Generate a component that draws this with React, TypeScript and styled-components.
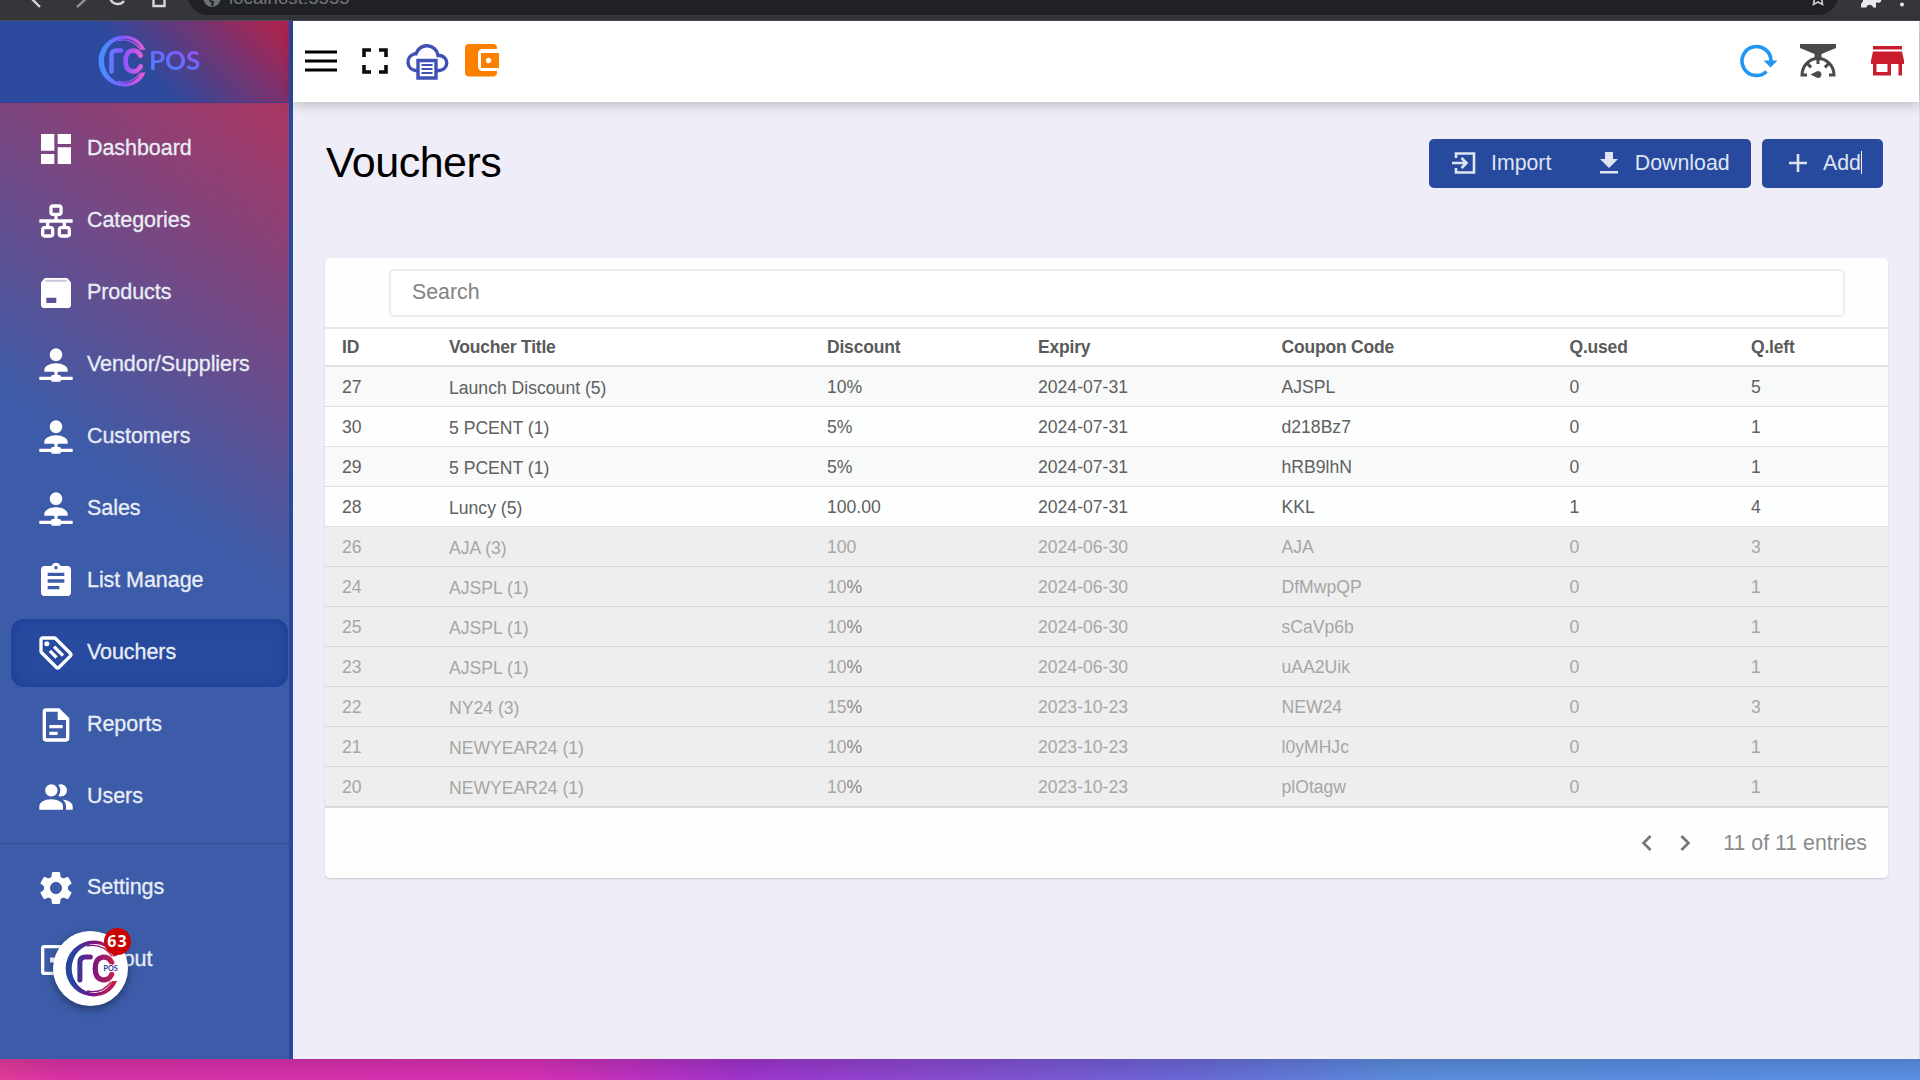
import React from "react";
import styled, { createGlobalStyle } from "styled-components";
import { MdDashboard, MdAssignment, MdSettings, MdChevronLeft, MdChevronRight } from "react-icons/md";

const Global = createGlobalStyle`
  * { box-sizing: border-box; }
  html, body { margin: 0; padding: 0; overflow: hidden; }
  body { font-family: "Liberation Sans", Arial, sans-serif; background: #35363a; }
`;

const Screen = styled.div`
  width: 1920px;
  height: 1080px;
  display: flex;
  flex-direction: column;
  overflow: hidden;
`;

const BrowserBar = styled.div`
  height: 21px;
  flex: none;
  display: flex;
  align-items: flex-end;
  overflow: hidden;
  background: #35363a;
  border-bottom: 1px solid #4a4a5c;
`;
const NavGlyphs = styled.svg`
  width: 188px;
  height: 20px;
  flex: none;
`;
const UrlPill = styled.div`
  width: 1650px;
  height: 40px;
  margin-bottom: 5px;
  border-radius: 20px;
  background: #202124;
  flex: none;
  display: flex;
  align-items: flex-end;
  justify-content: space-between;
  padding: 0 14px 0 15px;
`;
const UrlLeft = styled.div`
  display: flex;
  align-items: flex-end;
  gap: 8px;
  color: #74777b;
  font-size: 18.5px;
  line-height: 22px;
  letter-spacing: 0.1px;
`;
const UrlText = styled.span`
  padding-bottom: 6px;
`;
const BarRight = styled.svg`
  width: 82px;
  height: 20px;
  flex: none;
`;

const Body = styled.div`
  flex: none;
  height: 1038px;
  display: flex;
  background: #efedf7;
`;

const Sidebar = styled.aside`
  width: 293px;
  flex: none;
  display: flex;
  flex-direction: column;
  border-right: 4px solid #294a9f;
  background: #3c5ca9;
`;
const Brand = styled.div`
  height: 82px;
  flex: none;
  display: flex;
  align-items: center;
  padding: 0 0 2px 97px;
  border-bottom: 1px solid #43398a;
  background: linear-gradient(45deg, #2c4a9e 0%, #2c4a9e 47%, #aa2450 95%);
`;
const BrandName = styled.span`
  font: 700 26px "Lato", "Liberation Sans", sans-serif;
  line-height: 30px;
  letter-spacing: -0.1px;
  padding-bottom: 1px;
  background: linear-gradient(20deg, #4a86ff 10%, #5f72ff 45%, #9850f5 85%);
  -webkit-background-clip: text;
  background-clip: text;
  color: transparent;
`;
const Menu = styled.nav`
  flex: 1;
  display: flex;
  flex-direction: column;
  background: linear-gradient(215.4deg, #ab3662 0%, #3c5ca9 50%, #3c5ca9 100%) no-repeat;
  background-size: 289px 790px;
`;
const MenuGroup = styled.div<{ $top: number }>`
  display: flex;
  flex-direction: column;
  gap: 4px;
  padding: ${(p) => p.$top}px 1px 0 11px;
`;
const Separator = styled.div`
  height: 1px;
  margin-top: 12px;
  background: #34509a;
`;
const MenuItem = styled.div<{ $active?: boolean }>`
  height: 68px;
  display: flex;
  align-items: center;
  padding-left: 24.6px;
  gap: 11.4px;
  border-radius: 13px;
  color: #e9edf6;
  font-size: 21.5px;
  background: ${(p) => (p.$active ? "#274a9f" : "transparent")};
  box-shadow: ${(p) => (p.$active ? "inset 0 0 12px rgba(20, 50, 140, 0.6)" : "none")};
  svg {
    width: 40px;
    height: 40px;
    flex: none;
    fill: #fff;
    margin-bottom: 1px;
  }
`;
const MenuLabel = styled.span`
  letter-spacing: -0.06px;
  padding-bottom: 2px;
  -webkit-text-stroke: 0.3px currentColor;
`;

const ChatBubble = styled.div`
  position: absolute;
  left: 53px;
  top: 931px;
  width: 75px;
  height: 75px;
  padding: 9px 0 0 11px;
  border-radius: 50%;
  background: #fff;
  box-shadow: 0 3px 9px rgba(0, 0, 0, 0.4);
`;
const ChatBadge = styled.span`
  position: absolute;
  left: 51px;
  top: -3px;
  width: 27px;
  height: 27px;
  border-radius: 50%;
  background: #cc0202;
  color: #fff;
  font: bold 16px/27px "Open Sans", "Liberation Sans", sans-serif;
  letter-spacing: 1.2px;
  text-align: center;
`;

const Main = styled.main`
  flex: 1;
  display: flex;
  flex-direction: column;
  border-right: 1px solid #dcdae8;
`;
const TopBar = styled.header`
  height: 81px;
  flex: none;
  display: flex;
  align-items: center;
  background: #fff;
  padding: 0 15px 2px 12px;
  box-shadow: 0 3px 12px rgba(0, 0, 0, 0.22);
`;
const ToolIcon = styled.svg<{ $w: number; $h: number; $ml?: number }>`
  width: ${(p) => p.$w}px;
  height: ${(p) => p.$h}px;
  margin-left: ${(p) => p.$ml ?? 0}px;
  flex: none;
`;
const Spacer = styled.div`
  flex: 1;
`;

const Content = styled.section`
  display: flex;
  flex-direction: column;
  padding: 37px 31px 0 32px;
`;
const TitleRow = styled.div`
  display: flex;
  justify-content: space-between;
  height: 119px;
  padding-right: 5px;
`;
const Title = styled.h1`
  margin: 0 0 0 1px;
  font-size: 43px;
  font-weight: 400;
  line-height: 46px;
  letter-spacing: -0.5px;
  color: #000;
`;
const Actions = styled.div`
  display: flex;
  gap: 11px;
`;
const ButtonGroup = styled.div<{ $w: number }>`
  width: ${(p) => p.$w}px;
  height: 49px;
  display: flex;
  background: #274a9f;
  border-radius: 5px;
`;
const ActionButton = styled.button<{ $pl: number; $gap: number }>`
  display: flex;
  align-items: center;
  gap: ${(p) => p.$gap}px;
  border: 0;
  background: none;
  padding: 0 0 1px ${(p) => p.$pl}px;
  color: #dfe4f1;
  font: 21.3px "Liberation Sans", Arial, sans-serif;
  svg { flex: none; }
`;
const Caret = styled.span`
  width: 1px;
  height: 23px;
  display: inline-block;
  vertical-align: -4px;
  background: #eef;
`;

const Card = styled.div`
  width: 1563px;
  height: 620px;
  display: flex;
  flex-direction: column;
  background: #fdfefe;
  border-radius: 5px;
  box-shadow: 0 1px 2px rgba(0, 0, 0, 0.16);
  overflow: hidden;
`;
const SearchRow = styled.div`
  height: 69px;
  flex: none;
  padding: 11px 43px 0 64px;
`;
const SearchBox = styled.div`
  height: 48px;
  border: 2px solid #ececec;
  border-radius: 5px;
  background: #fff;
  padding-left: 21px;
  color: #828282;
  font-size: 21.3px;
  line-height: 43px;
`;
const GridRow = styled.div`
  display: grid;
  grid-template-columns: 107px 378px 211px 243.5px 288px 181.5px 1fr;
  padding-left: 17px;
`;
const HeadRow = styled(GridRow)`
  height: 40px;
  flex: none;
  border-top: 2px solid #e8eaea;
  border-bottom: 2px solid #e2e4e4;
  background: #fff;
  font-size: 17.5px;
  letter-spacing: -0.2px;
  font-weight: 700;
  line-height: 36px;
  color: #5a5a5a;
`;
const DataRow = styled(GridRow)<{ $expired: boolean; $striped: boolean }>`
  height: 40px;
  flex: none;
  font-size: 17.6px;
  line-height: 40px;
  border-bottom: 1px solid ${(p) => (p.$expired ? "#d6d6d6" : "#dfe1e1")};
  background: ${(p) => (p.$expired ? "#eeeeee" : p.$striped ? "#f8f9f9" : "#fdfefe")};
  color: ${(p) => (p.$expired ? "#a6a6a6" : "#606060")};
`;
const Cell = styled.span<{ $drop?: boolean }>`
  padding-top: ${(p) => (p.$drop ? 1.4 : 0)}px;
  white-space: nowrap;
`;
const Percent = styled.span<{ $strong: boolean }>`
  color: ${(p) => (p.$strong ? "#8a8a8a" : "inherit")};
`;
const Footer = styled.div`
  flex: 1;
  display: flex;
  align-items: center;
  justify-content: flex-end;
  gap: 6px;
  border-top: 1px solid #dcdcdc;
  padding: 0 21px 0 0;
  color: #8b8b8b;
  font-size: 21.3px;
  svg { color: #757575; width: 32px; height: 32px; }
`;
const Entries = styled.span`
  margin-left: 16px;
`;

const Taskbar = styled.div`
  flex: 1;
  background: linear-gradient(rgba(0, 0, 0, 0.12), rgba(0, 0, 0, 0) 100%),
    linear-gradient(90deg, #e23c9a 0, #d932a6 60px, #d630b4 530px, #a034cc 740px, #6b66d6 1180px, #5a8cdc 1400px, #5b90e6 1920px);
`;

const icon = {
  lan: (
    <svg viewBox="0 0 24 24"><path d="M10 2C8.900 2 8 2.900 8 4v3c0 1.110.900 2 2 2h1v2H2v2h4v2H5c-1.100 0-2 .900-2 2v3c0 1.110.900 2 2 2h4c1.110 0 2-.890 2-2v-3c0-1.100-.890-2-2-2H8v-2h8v2h-1c-1.100 0-2 .900-2 2v3c0 1.110.900 2 2 2h4c1.110 0 2-.890 2-2v-3c0-1.100-.890-2-2-2h-1v-2h4v-2h-9V9h1c1.110 0 2-.890 2-2V4c0-1.100-.890-2-2-2h-4m0 2h4v3h-4V4M5 17h4v3H5v-3m10 0h4v3h-4v-3Z" /></svg>
  ),
  box: (
    <svg viewBox="0 0 24 24"><path fillRule="evenodd" d="M5.300 3h13.400l2.300 2.700V19a2 2 0 0 1-2 2H5a2 2 0 0 1-2-2V5.700L5.300 3m.900 11.800V18h6v-3.200H6.200Z" /><path d="M6 4h12l1 1.300H5z" fill="#c9c3dc" /></svg>
  ),
  network: (
    <svg viewBox="0 0 24 24"><path d="M13 16v2h1a1 1 0 0 1 1 1h7v2h-7a1 1 0 0 1-1 1h-4a1 1 0 0 1-1-1H2v-2h7a1 1 0 0 1 1-1h1v-2H5v-1c0-2.210 3.130-4 7-4s7 1.790 7 4v1h-6M12 2a3.800 3.800 0 0 1 0 7.600a3.800 3.800 0 0 1 0-7.600Z" /></svg>
  ),
  tag: (
    <svg viewBox="0 0 24 24"><path d="M21.400 11.600l-9-9C12.100 2.200 11.600 2 11 2H4c-1.100 0-2 .900-2 2v7c0 .600.200 1.100.600 1.400l9 9c.400.400.900.600 1.400.600s1-.200 1.400-.600l7-7c.400-.400.600-.900.600-1.400s-.200-1-.600-1.400M13 20L4 11V4h7l9 9-7 7M6.500 5A1.500 1.500 0 1 1 5 6.500 1.500 1.500 0 0 1 6.500 5m3.600 3.900l1.400-1.400 5.400 5.400-1.400 1.400-5.400-5.400m-2.500 2.500L9 10l4 4-1.400 1.400-4-4Z" /></svg>
  ),
  file: (
    <svg viewBox="0 0 24 24"><path d="M6 2a2 2 0 0 0-2 2v16a2 2 0 0 0 2 2h12a2 2 0 0 0 2-2V8l-6-6H6m0 2h7v5h5v11H6V4m2 8v2h8v-2H8m0 4v2h5v-2H8Z" /></svg>
  ),
  people: (
    <svg viewBox="0 0 24 24">
      <circle cx="9.200" cy="8" r="3.700" />
      <path d="M2 19.600v-2c0-2.300 3.100-4.200 7.100-4.200s7.100 1.900 7.100 4.200v2zM16 13.500c3.500.500 6 2 6 4.100v2h-4v-2c0-1.700-.700-3-2-4.100zM14.900 4.300a3.700 3.700 0 1 1 0 7.400c-.600 0-1-.100-1.500-.300a5.800 5.800 0 0 0 0-6.800c.500-.200 1-.300 1.500-.300z" />
    </svg>
  ),
  logout: (
    <svg viewBox="0 0 24 24"><path d="M5 3a2 2 0 0 0-2 2v14a2 2 0 0 0 2 2h14V3H5m0 2h13v14H5V5m3.500 5.500h8v3h-8z" /></svg>
  ),
};

const LogoMark = ({ id, size, a, b, c, small }: { id: string; size: number; a: string; b: string; c: string; small?: boolean }) => (
  <svg width={size} height={size} viewBox="0 0 52 52" fill="none">
    <defs>
      <linearGradient id={id} x1="2" y1="0" x2="50" y2="0" gradientUnits="userSpaceOnUse">
        <stop offset="0.1" stopColor={a} />
        <stop offset="0.52" stopColor={b} />
        <stop offset="0.92" stopColor={c} />
      </linearGradient>
    </defs>
    <path d="M27 0.500A25.500 25.500 0 1 0 27 51.500C37 51.500 45 46 48.500 37.500L44 37.500C41 44 35 48.300 28 48.300A21 22.300 0 0 1 28 3.700C35 3.700 41 7.500 45 15L48.500 14.500C44 6 37 0.500 27 0.500z" fill={`url(#${id})`} />
    <path d="M21 5.500Q35 2.500 44 15M21 46.500Q35 49.500 43 38" stroke={`url(#${id})`} strokeWidth="1.300" />
    <path d="M14.500 36.500V20.500q0-5 5-5h4.500" stroke={`url(#${id})`} strokeWidth="4.600" strokeLinecap="round" />
    <path d="M43.500 20.500C40.500 13.500 28.500 13 28.500 26S40.500 38.500 43.500 31.500" stroke={`url(#${id})`} strokeWidth="4.800" strokeLinecap="round" />
    {small && (
      <text x="36" y="28.500" fontSize="6.600" fontFamily="Lato, sans-serif" fontWeight="700" fill="#33339a" stroke="#fff" strokeWidth="1.400" paintOrder="stroke">POS</text>
    )}
  </svg>
);

const menu: [string, React.ReactNode][] = [
  ["Dashboard", <MdDashboard />],
  ["Categories", icon.lan],
  ["Products", icon.box],
  ["Vendor/Suppliers", icon.network],
  ["Customers", icon.network],
  ["Sales", icon.network],
  ["List Manage", <MdAssignment />],
  ["Vouchers", icon.tag],
  ["Reports", icon.file],
  ["Users", icon.people],
];

const headings = ["ID", "Voucher Title", "Discount", "Expiry", "Coupon Code", "Q.used", "Q.left"];
const vouchers: string[][] = [
  ["27", "Launch Discount (5)", "10%", "2024-07-31", "AJSPL", "0", "5"],
  ["30", "5 PCENT (1)", "5%", "2024-07-31", "d218Bz7", "0", "1"],
  ["29", "5 PCENT (1)", "5%", "2024-07-31", "hRB9lhN", "0", "1"],
  ["28", "Luncy (5)", "100.00", "2024-07-31", "KKL", "1", "4"],
  ["26", "AJA (3)", "100", "2024-06-30", "AJA", "0", "3"],
  ["24", "AJSPL (1)", "10%", "2024-06-30", "DfMwpQP", "0", "1"],
  ["25", "AJSPL (1)", "10%", "2024-06-30", "sCaVp6b", "0", "1"],
  ["23", "AJSPL (1)", "10%", "2024-06-30", "uAA2Uik", "0", "1"],
  ["22", "NY24 (3)", "15%", "2023-10-23", "NEW24", "0", "3"],
  ["21", "NEWYEAR24 (1)", "10%", "2023-10-23", "l0yMHJc", "0", "1"],
  ["20", "NEWYEAR24 (1)", "10%", "2023-10-23", "plOtagw", "0", "1"],
];

export default function App() {
  return (
    <Screen>
      <Global />
      <BrowserBar>
        <NavGlyphs viewBox="0 0 188 20" fill="none" stroke="#d5d7da" strokeWidth="2.400">
          <path d="M30-3L40 7" />
          <path d="M88-3L77 7" stroke="#8f9194" />
          <path d="M110-2A8 8 0 0 0 124 1" />
          <path d="M151-2L159-9L167-2M153.500-3V6h11V-3" />
        </NavGlyphs>
        <UrlPill>
          <UrlLeft>
            <svg width="18" height="26" viewBox="0 0 18 26">
              <circle cx="9" cy="9.500" r="8.500" fill="#6f7276" />
              <path d="M3 6q4 1 4 4t3 3l-1 4M12 3q-2 4 3 6" stroke="#202124" strokeWidth="2" fill="none" />
            </svg>
            <UrlText>localhost:5555</UrlText>
          </UrlLeft>
          <svg width="12" height="20" viewBox="0 0 12 20">
            <path d="M1-3L2.500 3L1.500 9.500L6 7L10.500 9.500L9.500 3L11-3" stroke="#c8cacd" strokeWidth="1.700" fill="none" />
          </svg>
        </UrlPill>
        <BarRight viewBox="0 0 82 20">
          <path d="M25-3v4l-2 3v3.500h5.500a3.300 3.300 0 0 1 6.500 0H38V2.500h1.500a2.500 2.500 0 0 0 2-5.500z" fill="#e8eaed" />
          <circle cx="64" cy="4.500" r="2" fill="#e8eaed" />
          <circle cx="64" cy="-2" r="2" fill="#e8eaed" />
        </BarRight>
      </BrowserBar>

      <Body>
        <Sidebar>
          <Brand>
            <LogoMark id="brandMark" size={52} a="#4a8cff" b="#8a55ff" c="#ea5ad6" />
            <BrandName>POS</BrandName>
          </Brand>
          <Menu>
            <MenuGroup $top={12}>
              {menu.map(([label, glyph]) => (
                <MenuItem key={label} $active={label === "Vouchers"}>
                  {glyph}
                  <MenuLabel>{label}</MenuLabel>
                </MenuItem>
              ))}
            </MenuGroup>
            <Separator />
            <MenuGroup $top={10}>
              <MenuItem>
                <MdSettings />
                <MenuLabel>Settings</MenuLabel>
              </MenuItem>
              <MenuItem>
                {icon.logout}
                <MenuLabel>Logout</MenuLabel>
              </MenuItem>
            </MenuGroup>
          </Menu>
        </Sidebar>

        <Main>
          <TopBar>
            <ToolIcon $w={32} $h={24} viewBox="0 0 32 24">
              <path d="M0 3h32M0 12h32M0 21h32" stroke="#000" strokeWidth="3" />
            </ToolIcon>
            <ToolIcon $w={26} $h={26} $ml={24.5} viewBox="0 0 26 26" fill="none" stroke="#0b0b0b" strokeWidth="3.600">
              <path d="M2 9V2H9M17 2H24V9M24 17V24H17M9 24H2V17" />
            </ToolIcon>
            <ToolIcon $w={44} $h={38} $ml={17.5} viewBox="0 0 44 38" fill="none" stroke="#3f51b5" strokeWidth="3.400">
              <path d="M12 28.500H10.500A8.500 8.500 0 0 1 9.500 11.800H11A11.300 11.300 0 0 1 33 13.500H34A7.500 7.500 0 0 1 34.500 28.500H32" />
              <path d="M13 18.500H31V36H13z" fill="#fff" />
              <path d="M16.500 23H27.500M16.500 27H27.500M16.500 31H27.500" strokeWidth="1.800" />
            </ToolIcon>
            <ToolIcon $w={35} $h={33} $ml={16} viewBox="0 0 35 33">
              <path d="M4 0H28.500A4 4 0 0 1 32 4V5H17.500A4.500 4.500 0 0 0 13 9.500V22.500A4.500 4.500 0 0 0 17.500 27H32V28.500A4 4 0 0 1 28.500 32.500H4A4 4 0 0 1 0 28.500V4A4 4 0 0 1 4 0z" fill="#fb8000" />
              <path fillRule="evenodd" d="M16 9H34V24H16zM23.500 13.700a2.800 2.800 0 1 0 .1 0z" fill="#fb8000" />
            </ToolIcon>
            <Spacer />
            <ToolIcon $w={38} $h={34} viewBox="0 0 38 34">
              <path d="M26.500 27.500A14.500 14.500 0 1 1 31 17" stroke="#2196f3" strokeWidth="3.600" fill="none" />
              <path d="M23.500 16.500H37.500L30.500 23.500z" fill="#2196f3" />
            </ToolIcon>
            <ToolIcon $w={36} $h={34} $ml={22} viewBox="0 0 36 34">
              <path d="M0 0H36V4L21.500 10V14H14.500V10L0 4z" fill="#4a4a4a" />
              <path d="M7 31H2A16 16.500 0 0 1 34 31H29M18 14.500V20M8 20l3 3.500M28 20l-3 3.500" stroke="#4a4a4a" strokeWidth="3" fill="none" />
              <path d="M10.500 30.500L16.500 27.500A3.400 3.400 0 1 1 16.500 33.500z" fill="#4a4a4a" />
            </ToolIcon>
            <ToolIcon $w={33} $h={30} $ml={35} viewBox="0 0 33 30" fill="#c91d2e">
              <path d="M2 0H31V3.500H2z" />
              <path fillRule="evenodd" d="M2 5.500H31L33 14.500V18H31V29.500H27.500V18H20V29.500H2V18H0V14.500zM5.500 18V26H16.500V18z" />
            </ToolIcon>
          </TopBar>

          <Content>
            <TitleRow>
              <Title>Vouchers</Title>
              <Actions>
                <ButtonGroup $w={322}>
                  <ActionButton $pl={23} $gap={15}>
                    <svg width="24" height="22" viewBox="0 0 24 22" fill="none" stroke="#dfe4f1" strokeWidth="2.600">
                      <path d="M4 6V1.500H22V20.500H4V16M0 11H14M9.500 6L14.500 11L9.500 16" />
                    </svg>
                    Import
                  </ActionButton>
                  <ActionButton $pl={48.5} $gap={17}>
                    <svg width="18" height="22" viewBox="0 0 18 22" fill="#dfe4f1">
                      <path d="M5 0H13V7H18L9 16L0 7H5zM0 19H18V21.500H0z" />
                    </svg>
                    Download
                  </ActionButton>
                </ButtonGroup>
                <ButtonGroup $w={121}>
                  <ActionButton $pl={27} $gap={16}>
                    <svg width="18" height="18" viewBox="0 0 18 18" fill="none" stroke="#dfe4f1" strokeWidth="2.600">
                      <path d="M9 0V18M0 9H18" />
                    </svg>
                    <span>Add<Caret /></span>
                  </ActionButton>
                </ButtonGroup>
              </Actions>
            </TitleRow>

            <Card>
              <SearchRow>
                <SearchBox>Search</SearchBox>
              </SearchRow>
              <HeadRow>
                {headings.map((h) => (
                  <Cell key={h}>{h}</Cell>
                ))}
              </HeadRow>
              {vouchers.map((row, i) => {
                const expired = i > 3;
                return (
                  <DataRow key={row[0]} $expired={expired} $striped={i % 2 === 0}>
                    {row.map((value, c) =>
                      value.endsWith("%") ? (
                        <Cell key={c}>
                          {value.slice(0, -1)}
                          <Percent $strong={expired}>%</Percent>
                        </Cell>
                      ) : (
                        <Cell key={c} $drop={c === 1}>{value}</Cell>
                      )
                    )}
                  </DataRow>
                );
              })}
              <Footer>
                <MdChevronLeft />
                <MdChevronRight />
                <Entries>11 of 11 entries</Entries>
              </Footer>
            </Card>
          </Content>
        </Main>
      </Body>
      <Taskbar />

      <ChatBubble>
        <LogoMark id="chatMark" size={57} a="#2346a0" b="#7a1583" c="#c8214a" small />
        <ChatBadge>63</ChatBadge>
      </ChatBubble>
    </Screen>
  );
}
